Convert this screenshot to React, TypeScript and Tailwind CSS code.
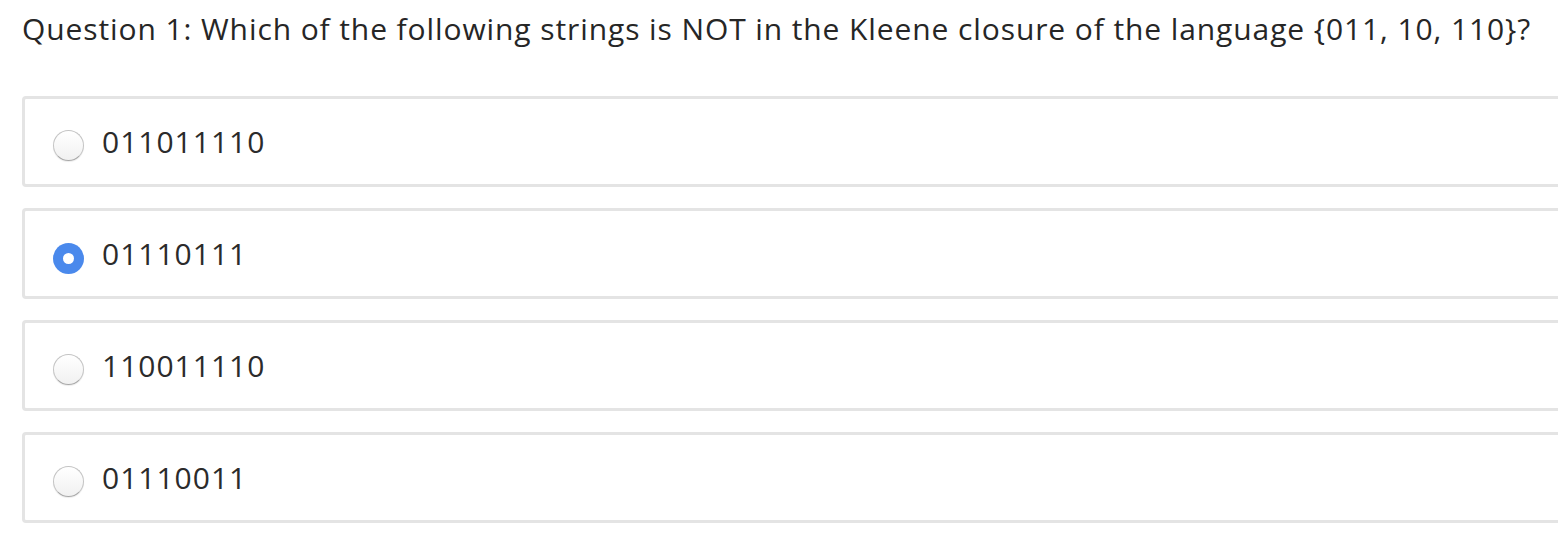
import { useState } from 'react';

const options = ['011011110', '01110111', '110011110', '01110011'];

export default function App() {
  const [selected, setSelected] = useState(1);

  return (
    <div className="w-[1558px] h-[538px] bg-white overflow-hidden pl-[22px] pt-[8px]" style={{ fontFamily: '"Open Sans", sans-serif' }}>
      <h1 className="text-[30px] leading-[42px] tracking-[0.9px] text-[#262626] whitespace-nowrap">
        Question 1: Which of the following strings is NOT in the Kleene closure of the language {'{'}011, 10, 110{'}'}?
      </h1>

      <div className="mt-[46px] flex flex-col gap-[21px]">
        {options.map((opt, i) => (
          <label
            key={opt}
            onClick={() => setSelected(i)}
            className="w-[1560px] h-[91px] flex items-center gap-[18px] pl-[28px] border-[3px] border-r-0 border-[#e4e4e4] rounded-l-[4px] cursor-pointer"
          >
            {selected === i ? (
              <span className="mt-[9px] w-[31px] h-[31px] rounded-full bg-[#4a89ec] flex items-center justify-center shrink-0">
                <span className="w-[11px] h-[11px] rounded-full bg-white" />
              </span>
            ) : (
              <span className="mt-[8px] w-[31px] h-[31px] rounded-full border border-[#c4c4c4] border-b-[#a8a8a8] bg-gradient-to-b from-white to-[#f1f1f1] shadow-[0_1px_1px_rgba(0,0,0,0.08)] shrink-0" />
            )}
            <span className="text-[30px] tracking-[1px] text-[#2b2b2b] leading-none">{opt}</span>
          </label>
        ))}
      </div>
    </div>
  );
}
